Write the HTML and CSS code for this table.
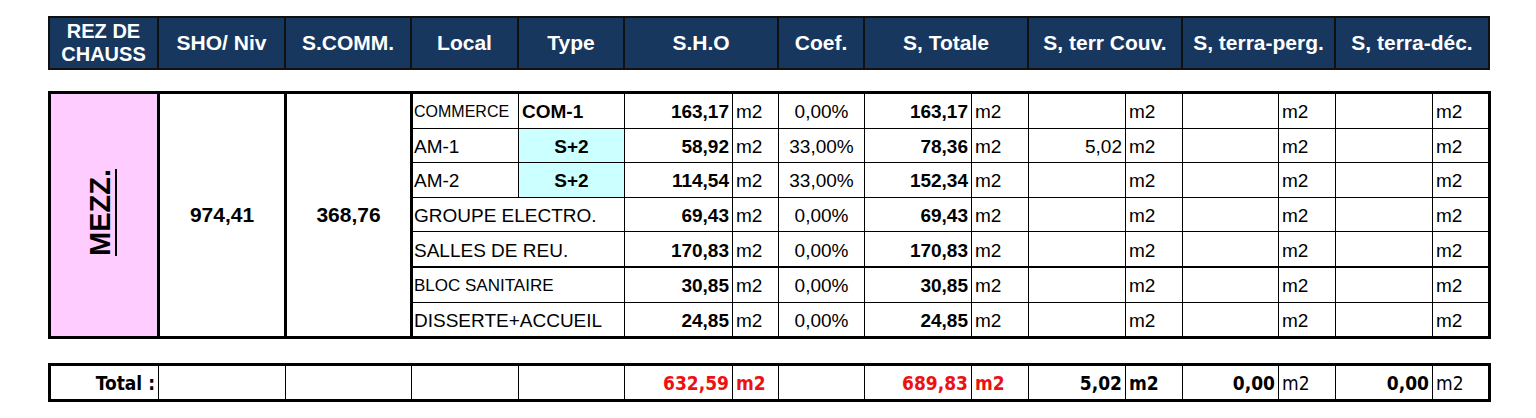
FILE: index.html
```html
<!DOCTYPE html>
<html lang="fr">
<head>
<meta charset="utf-8">
<title>MEZZ.</title>
<link rel="stylesheet" href="styles.css">
</head>
<body>
<div class="sheet">
  <table class="grid head">
    <colgroup>
      <col class="w1"><col class="w2"><col class="w3"><col class="w4"><col class="w5">
      <col class="w6"><col class="w7"><col class="w8"><col class="w9"><col class="w10">
      <col class="w11"><col class="w12"><col class="w13"><col class="w14"><col class="w15"><col class="w16">
    </colgroup>
    <tr>
      <th class="two">REZ DE<br>CHAUSS</th>
      <th>SHO/ Niv</th>
      <th>S.COMM.</th>
      <th>Local</th>
      <th>Type</th>
      <th colspan="2">S.H.O</th>
      <th>Coef.</th>
      <th colspan="2">S, Totale</th>
      <th colspan="2">S, terr Couv.</th>
      <th colspan="2">S, terra-perg.</th>
      <th colspan="2">S, terra-déc.</th>
    </tr>
  </table>

  <table class="grid body">
    <colgroup>
      <col class="w1"><col class="w2"><col class="w3"><col class="w4"><col class="w5">
      <col class="w6"><col class="w7"><col class="w8"><col class="w9"><col class="w10">
      <col class="w11"><col class="w12"><col class="w13"><col class="w14"><col class="w15"><col class="w16">
    </colgroup>
    <tr>
      <td class="level" rowspan="7"><span class="level-text">MEZZ.</span></td>
      <td class="big" rowspan="7">974,41</td>
      <td class="big" rowspan="7">368,76</td>
      <td class="local small">COMMERCE</td>
      <td class="type-code">COM-1</td>
      <td class="val">163,17</td><td class="unit">m2</td>
      <td class="coef">0,00%</td>
      <td class="val">163,17</td><td class="unit">m2</td>
      <td class="num"></td><td class="unit">m2</td>
      <td class="num"></td><td class="unit">m2</td>
      <td class="num"></td><td class="unit">m2</td>
    </tr>
    <tr>
      <td class="local">AM-1</td>
      <td class="type-s">S+2</td>
      <td class="val">58,92</td><td class="unit">m2</td>
      <td class="coef">33,00%</td>
      <td class="val">78,36</td><td class="unit">m2</td>
      <td class="num">5,02</td><td class="unit">m2</td>
      <td class="num"></td><td class="unit">m2</td>
      <td class="num"></td><td class="unit">m2</td>
    </tr>
    <tr>
      <td class="local">AM-2</td>
      <td class="type-s">S+2</td>
      <td class="val">114,54</td><td class="unit">m2</td>
      <td class="coef">33,00%</td>
      <td class="val">152,34</td><td class="unit">m2</td>
      <td class="num"></td><td class="unit">m2</td>
      <td class="num"></td><td class="unit">m2</td>
      <td class="num"></td><td class="unit">m2</td>
    </tr>
    <tr>
      <td class="local" colspan="2">GROUPE ELECTRO.</td>
      <td class="val">69,43</td><td class="unit">m2</td>
      <td class="coef">0,00%</td>
      <td class="val">69,43</td><td class="unit">m2</td>
      <td class="num"></td><td class="unit">m2</td>
      <td class="num"></td><td class="unit">m2</td>
      <td class="num"></td><td class="unit">m2</td>
    </tr>
    <tr class="split">
      <td class="local" colspan="2">SALLES DE REU.</td>
      <td class="val">170,83</td><td class="unit">m2</td>
      <td class="coef">0,00%</td>
      <td class="val">170,83</td><td class="unit">m2</td>
      <td class="num"></td><td class="unit">m2</td>
      <td class="num"></td><td class="unit">m2</td>
      <td class="num"></td><td class="unit">m2</td>
    </tr>
    <tr>
      <td class="local mid" colspan="2">BLOC SANITAIRE</td>
      <td class="val">30,85</td><td class="unit">m2</td>
      <td class="coef">0,00%</td>
      <td class="val">30,85</td><td class="unit">m2</td>
      <td class="num"></td><td class="unit">m2</td>
      <td class="num"></td><td class="unit">m2</td>
      <td class="num"></td><td class="unit">m2</td>
    </tr>
    <tr>
      <td class="local" colspan="2">DISSERTE+ACCUEIL</td>
      <td class="val">24,85</td><td class="unit">m2</td>
      <td class="coef">0,00%</td>
      <td class="val">24,85</td><td class="unit">m2</td>
      <td class="num"></td><td class="unit">m2</td>
      <td class="num"></td><td class="unit">m2</td>
      <td class="num"></td><td class="unit">m2</td>
    </tr>
  </table>

  <table class="grid total">
    <colgroup>
      <col class="w1"><col class="w2"><col class="w3"><col class="w4"><col class="w5">
      <col class="w6"><col class="w7"><col class="w8"><col class="w9"><col class="w10">
      <col class="w11"><col class="w12"><col class="w13"><col class="w14"><col class="w15"><col class="w16">
    </colgroup>
    <tr>
      <td class="t-label">Total :</td>
      <td></td><td></td><td></td><td></td>
      <td class="t-val red">632,59</td><td class="t-unit red">m2</td>
      <td></td>
      <td class="t-val red">689,83</td><td class="t-unit red">m2</td>
      <td class="t-val">5,02</td><td class="t-unit">m2</td>
      <td class="t-val">0,00</td><td class="t-unit plain">m2</td>
      <td class="t-val">0,00</td><td class="t-unit plain">m2</td>
    </tr>
  </table>
</div>
</body>
</html>
```

FILE: styles.css
```css
html, body {
  margin: 0;
  padding: 0;
  background: #ffffff;
}

body {
  font-family: "Liberation Sans", Arial, sans-serif;
  color: #000;
}

.sheet {
  padding: 16px 0 0 48px;
  width: 1440px;
}

.grid {
  border-collapse: collapse;
  table-layout: fixed;
  width: 1440px;
}

.w1 { width: 109px; }
.w2 { width: 127px; }
.w3 { width: 126px; }
.w4 { width: 107px; }
.w5 { width: 106px; }
.w6 { width: 108px; }
.w7 { width: 46px; }
.w8 { width: 86px; }
.w9 { width: 107px; }
.w10 { width: 57px; }
.w11 { width: 97px; }
.w12 { width: 57px; }
.w13 { width: 96px; }
.w14 { width: 57px; }
.w15 { width: 97px; }
.w16 { width: 57px; }

/* header */
.head th {
  background: #17375e;
  color: #ffffff;
  font-size: 21px;
  font-weight: bold;
  height: 50px;
  padding: 0;
  border: 2px solid #111;
  text-align: center;
  vertical-align: middle;
  white-space: nowrap;
}

.head th.two {
  line-height: 23px;
  font-size: 20px;
}

/* body */
.body {
  margin-top: 21px;
  border: 3px solid #000;
}

.body td {
  height: 30.6px;
  padding: 3px 0 0 0;
  border: 1.5px solid #000;
  font-size: 19px;
  vertical-align: middle;
  white-space: nowrap;
  overflow: hidden;
}

.body td.level {
  background: #ffccff;
  border: 3px solid #000;
  text-align: center;
  padding: 0;
}

.level-text {
  display: inline-block;
  writing-mode: vertical-rl;
  transform: rotate(180deg);
  font-size: 29px;
  font-weight: bold;
  text-decoration: underline;
  text-decoration-thickness: 2px;
  text-underline-offset: 0px;
  margin-right: 7px;
}

.body td.big {
  border: 3px solid #000;
  text-align: center;
  font-weight: bold;
  font-size: 21px;
  padding: 0;
}

.body td.local {
  padding-left: 1px;
}

.body td.small {
  font-size: 16px;
}

.body td.mid {
  font-size: 17px;
}

.body td.type-code {
  font-weight: bold;
  font-size: 19px;
  padding-left: 3px;
}

.body td.type-s {
  background: #ccffff;
  font-weight: bold;
  font-size: 19px;
  text-align: center;
}

.body td.val {
  text-align: right;
  font-weight: bold;
  font-size: 19px;
  padding-right: 3px;
}

.body td.num {
  text-align: right;
  padding-right: 3px;
}

.body td.unit {
  padding-left: 3px;
}

.body td.coef {
  text-align: center;
}

.body tr.split td {
  border-bottom-width: 2.5px;
}

/* total */
.total {
  margin-top: 24px;
  border: 3px solid #000;
}

.total td {
  height: 33px;
  padding: 0;
  border: 1.5px solid #000;
  font-family: "Liberation Sans Narrow", "DejaVu Sans Condensed", "Liberation Sans", sans-serif;
  font-size: 19px;
  font-weight: bold;
  vertical-align: middle;
  white-space: nowrap;
}

.total td.t-label {
  text-align: right;
  padding-right: 3px;
}

.total td.t-val {
  text-align: right;
  padding-right: 3px;
}

.total td.t-unit {
  padding-left: 3px;
}

.total td.plain {
  font-weight: normal;
}

.total td.red {
  color: #ee1111;
}
```
